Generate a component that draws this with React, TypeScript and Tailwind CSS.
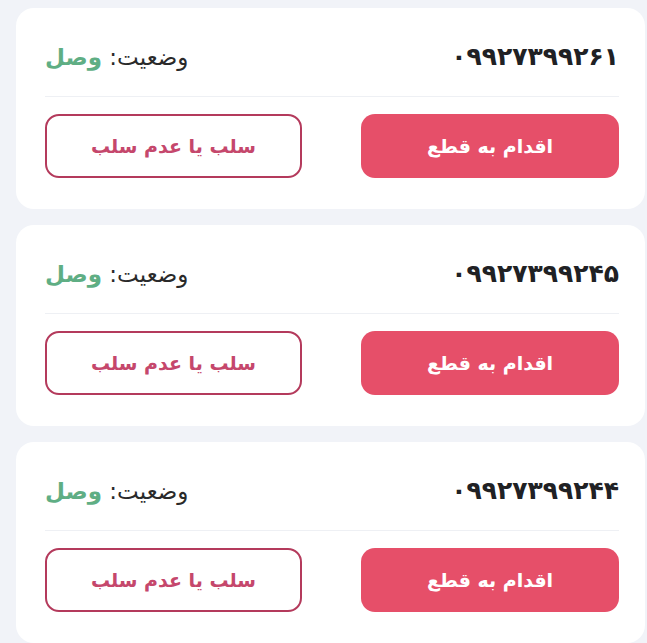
import React from "react";

const lines = [
  { number: "۰۹۹۲۷۳۹۹۲۶۱", status: "وصل" },
  { number: "۰۹۹۲۷۳۹۹۲۴۵", status: "وصل" },
  { number: "۰۹۹۲۷۳۹۹۲۴۴", status: "وصل" },
];

function LineCard({ number, status }: { number: string; status: string }) {
  return (
    <div
      dir="rtl"
      className="bg-white rounded-[18px] h-[201px] shrink-0 pr-[26px] pl-[29px] flex flex-col"
    >
      <div className="h-[89px] pt-[10px] flex items-center justify-between border-b border-[#eef0f4]">
        <span className="text-[25px] font-bold text-[#202124] tracking-[1.5px]">{number}</span>
        <span className="text-[23px] text-[#2a2a2a]">
          وضعیت: <span className="text-[#5fae84] font-bold">{status}</span>
        </span>
      </div>
      <div className="flex justify-between mt-[17px]">
        <button className="w-[258px] h-[64px] rounded-[14px] bg-[#e64f69] text-white text-[19px] font-bold">
          اقدام به قطع
        </button>
        <button className="w-[257px] h-[64px] rounded-[14px] border-2 border-[#b43a5c] bg-white text-[#c5476c] text-[19px] font-bold">
          سلب یا عدم سلب
        </button>
      </div>
    </div>
  );
}

export default function App() {
  return (
    <div
      className="w-[647px] h-[643px] overflow-hidden bg-[#f1f3f8] pt-[8px] pl-[16px] pr-[2px] flex flex-col gap-[16px]"
      style={{ fontFamily: '"DejaVu Sans", "Noto Sans", sans-serif' }}
    >
      {lines.map((l, i) => (
        <LineCard key={i} number={l.number} status={l.status} />
      ))}
    </div>
  );
}
